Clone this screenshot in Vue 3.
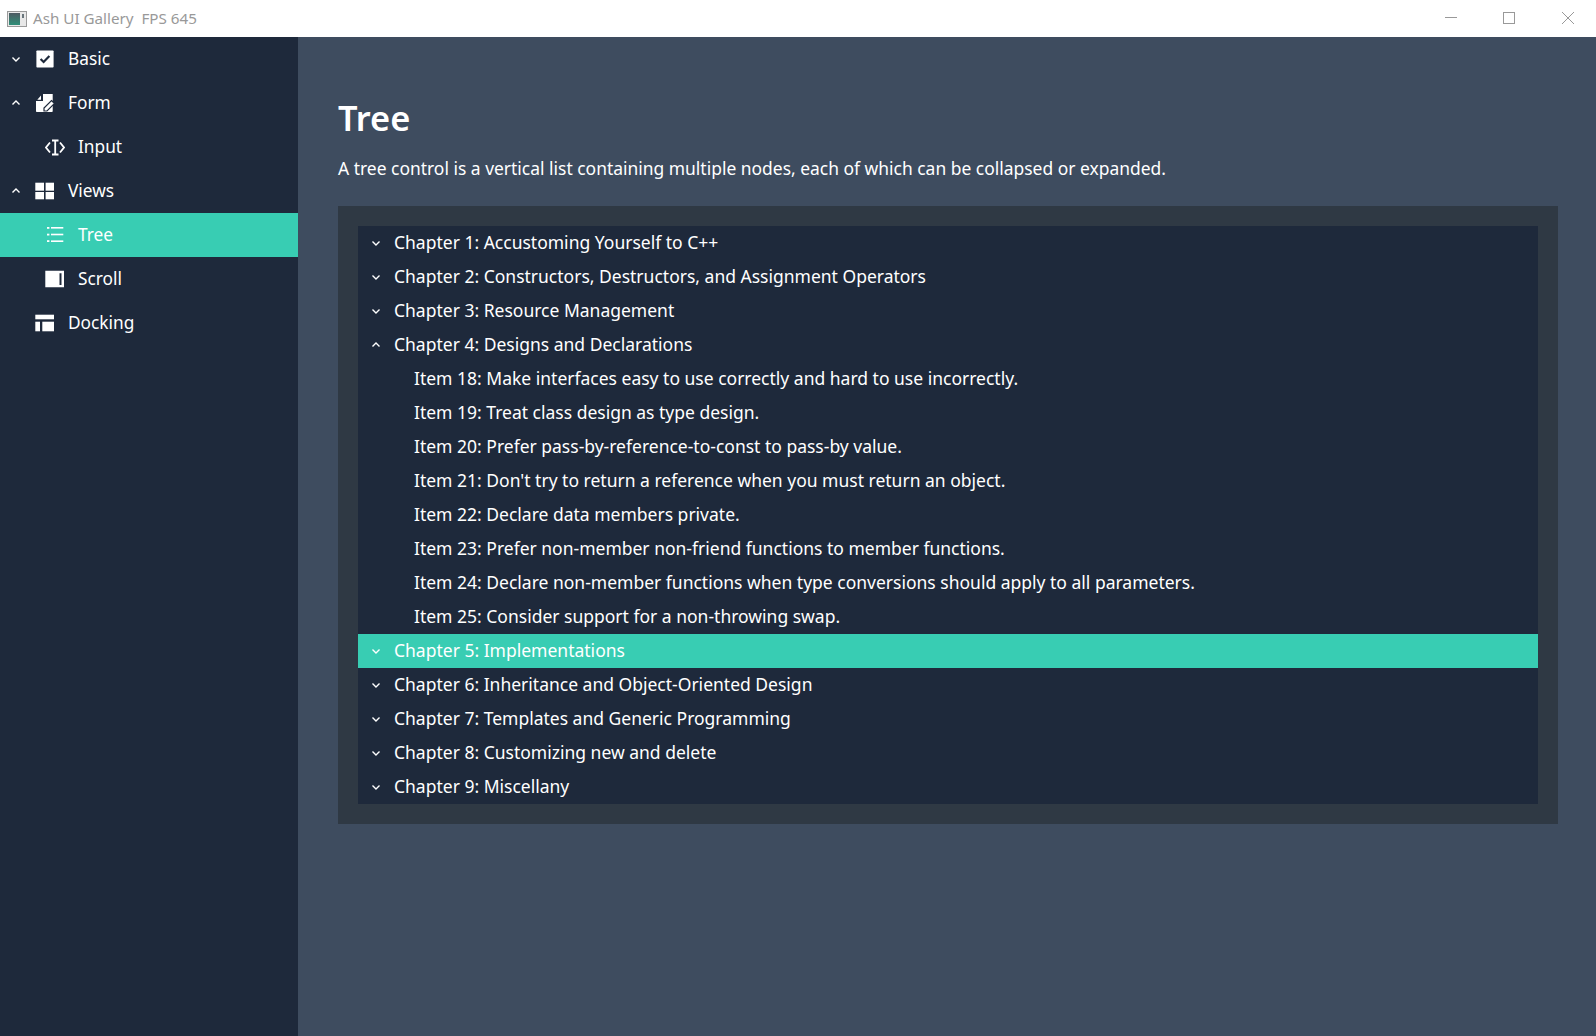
<script setup>
const chapters = [
  { title: 'Chapter 1: Accustoming Yourself to C++' },
  { title: 'Chapter 2: Constructors, Destructors, and Assignment Operators' },
  { title: 'Chapter 3: Resource Management' },
  {
    title: 'Chapter 4: Designs and Declarations',
    open: true,
    items: [
      'Item 18: Make interfaces easy to use correctly and hard to use incorrectly.',
      'Item 19: Treat class design as type design.',
      'Item 20: Prefer pass-by-reference-to-const to pass-by value.',
      "Item 21: Don't try to return a reference when you must return an object.",
      'Item 22: Declare data members private.',
      'Item 23: Prefer non-member non-friend functions to member functions.',
      'Item 24: Declare non-member functions when type conversions should apply to all parameters.',
      'Item 25: Consider support for a non-throwing swap.'
    ]
  },
  { title: 'Chapter 5: Implementations', active: true },
  { title: 'Chapter 6: Inheritance and Object-Oriented Design' },
  { title: 'Chapter 7: Templates and Generic Programming' },
  { title: 'Chapter 8: Customizing new and delete' },
  { title: 'Chapter 9: Miscellany' }
]
</script>

<template>
  <div class="window">
    <header class="titlebar">
      <div class="app-title">
        <svg class="app-icon" width="20" height="16" viewBox="0 0 20 16">
          <defs>
            <linearGradient id="appFill" x1="0" y1="0" x2="0" y2="1">
              <stop offset="0" stop-color="#4d5a62" />
              <stop offset="1" stop-color="#2f8f78" />
            </linearGradient>
          </defs>
          <rect x="0.5" y="0.5" width="19" height="15" fill="#e8e8e8" stroke="#9a9a9a" />
          <rect x="2" y="2" width="11" height="12" fill="url(#appFill)" />
          <rect x="15" y="3" width="2" height="4" fill="#6a767c" />
        </svg>
        <span>Ash UI Gallery&nbsp; FPS 645</span>
      </div>
      <div class="win-buttons">
        <svg width="12" height="12" viewBox="0 0 12 12"><path d="M0 5.5h12" stroke="#999" stroke-width="1" /></svg>
        <svg width="12" height="12" viewBox="0 0 12 12"><rect x="0.5" y="0.5" width="11" height="11" fill="none" stroke="#999" /></svg>
        <svg class="close" width="12" height="12" viewBox="0 0 12 12"><path d="M0 0l12 12M12 0L0 12" stroke="#999" stroke-width="1" /></svg>
      </div>
    </header>

    <div class="body">
      <nav class="sidebar">
        <div class="side-row">
          <svg class="arrow" viewBox="0 0 10 10"><path d="M1.5 3.5L5 7l3.5-3.5" /></svg>
          <svg class="side-icon" viewBox="0 0 20 20">
            <rect x="1.4" y="1.4" width="17.2" height="17.2" rx="0.8" fill="#fff" />
            <path d="M5.6 10l3 3 5.8-6" fill="none" stroke="#1e293b" stroke-width="2.2" />
          </svg>
          <span>Basic</span>
        </div>
        <div class="side-row">
          <svg class="arrow" viewBox="0 0 10 10"><path d="M1.5 6.5L5 3l3.5 3.5" /></svg>
          <svg class="side-icon" viewBox="0 0 20 20">
            <path fill="#fff" d="M2.3 6.8L6 2.4v4.4z" />
            <path fill="#fff" d="M8 1h9.7v17.2a.8.8 0 0 1-.8.8H1.8a.8.8 0 0 1-.8-.8V8h7z" />
            <path fill="#fff" stroke="#1e293b" stroke-width="1.2" d="M16.5 7.5l3 3-7.5 7.5H9v-3z" />
          </svg>
          <span>Form</span>
        </div>
        <div class="side-row child">
          <svg class="side-icon" viewBox="0 0 20 20" fill="none" stroke="#fff" stroke-width="1.8">
            <path d="M5 5.5L1 10.5l4 5M15 5.5l4 5-4 5" />
            <path d="M7 3.5h6.5M7 17.5h6.5M10.2 3.5v14" />
          </svg>
          <span>Input</span>
        </div>
        <div class="side-row">
          <svg class="arrow" viewBox="0 0 10 10"><path d="M1.5 6.5L5 3l3.5 3.5" /></svg>
          <svg class="side-icon" viewBox="0 0 20 20" fill="#fff">
            <rect x="0.3" y="1.7" width="8.7" height="8" />
            <rect x="10.6" y="1.7" width="8.4" height="8" />
            <rect x="0.3" y="11" width="8.7" height="7.3" />
            <rect x="10.6" y="11" width="8.4" height="7.3" />
          </svg>
          <span>Views</span>
        </div>
        <div class="side-row child active">
          <svg class="side-icon" viewBox="0 0 20 20" fill="#fff">
            <rect x="2" y="2" width="2.4" height="1.8" />
            <rect x="2" y="8.7" width="2.4" height="1.8" />
            <rect x="2" y="15.2" width="2.4" height="1.8" />
            <rect x="6" y="2" width="12.3" height="1.6" />
            <rect x="6" y="8.7" width="12.3" height="1.6" />
            <rect x="6" y="15.4" width="12.3" height="1.6" />
          </svg>
          <span>Tree</span>
        </div>
        <div class="side-row child">
          <svg class="side-icon" viewBox="0 0 20 20">
            <path fill="#fff" fill-rule="evenodd" d="M0.3 1.7H19v16.6H0.3zM14.5 4.3V16h2V4.3z" />
          </svg>
          <span>Scroll</span>
        </div>
        <div class="side-row">
          <span class="arrow-gap"></span>
          <svg class="side-icon" viewBox="0 0 20 20" fill="#fff">
            <rect x="0.3" y="1.7" width="18.7" height="4.6" />
            <rect x="0.3" y="8.7" width="4.7" height="9.6" />
            <rect x="7.3" y="8.7" width="11.7" height="9.6" />
          </svg>
          <span>Docking</span>
        </div>
      </nav>

      <main class="content">
        <h1>Tree</h1>
        <p class="desc">A tree control is a vertical list containing multiple nodes, each of which can be collapsed or expanded.</p>
        <section class="panel">
          <div class="tree">
            <template v-for="ch in chapters" :key="ch.title">
              <div class="tree-row" :class="{ active: ch.active }">
                <svg class="arrow" viewBox="0 0 10 10">
                  <path :d="ch.open ? 'M1.5 6.5L5 3l3.5 3.5' : 'M1.5 3.5L5 7l3.5-3.5'" />
                </svg>
                <span class="label">{{ ch.title }}</span>
              </div>
              <div v-for="item in ch.items" :key="item" class="tree-row item">
                <span class="label">{{ item }}</span>
              </div>
            </template>
          </div>
        </section>
      </main>
    </div>
  </div>
</template>

<style>
html, body {
  margin: 0;
  background: #3e4c5f;
}
</style>

<style scoped>
.window {
  width: 1596px;
  height: 1036px;
  display: flex;
  flex-direction: column;
  overflow: hidden;
  font-family: "Noto Sans", sans-serif;
  font-size: 17.5px;
  color: #fff;
}

.titlebar {
  height: 37px;
  flex: none;
  background: #fff;
  display: flex;
  align-items: center;
  justify-content: space-between;
}

.app-title {
  display: flex;
  align-items: center;
  gap: 6px;
  padding-left: 7px;
  font-size: 15.2px;
  color: #999;
}

.app-title span {
  margin-top: -2px;
}

.win-buttons {
  display: flex;
  gap: 46px;
  padding: 0 22px 1px 0;
}

.win-buttons .close {
  margin-left: 1px;
}

.body {
  flex: 1;
  display: flex;
  min-height: 0;
}

.sidebar {
  width: 298px;
  flex: none;
  background: #1e293b;
  font-size: 17.3px;
}

.side-row {
  height: 44px;
  display: flex;
  align-items: center;
  padding-left: 11px;
}

.side-row span {
  margin-top: -2px;
}

.side-row.child {
  padding-left: 45px;
}

.side-row.active,
.tree-row.active {
  background: #38cdb3;
}

.arrow {
  width: 10px;
  height: 10px;
  flex: none;
  fill: none;
  stroke: #fff;
  stroke-width: 1.4;
}

.arrow-gap {
  width: 10px;
  flex: none;
}

.side-icon {
  width: 20px;
  height: 20px;
  flex: none;
  margin-left: 14px;
  margin-right: 13px;
}

.child .side-icon {
  margin-left: 0;
}

.content {
  flex: 1;
  min-width: 0;
  background: #3e4c5f;
  padding: 59px 38px 0 40px;
}

h1 {
  margin: 0;
  font-size: 34.4px;
  font-weight: 600;
  line-height: 44px;
}

.desc {
  margin: 15px 0 0;
  font-size: 17.45px;
  line-height: 26px;
}

.panel {
  margin-top: 25px;
  padding: 20px;
  background: #2f3944;
}

.tree {
  background: #1e293b;
}

.tree-row {
  height: 34px;
  display: flex;
  align-items: center;
  gap: 13px;
  padding-left: 13px;
  white-space: nowrap;
}

.tree-row .label {
  margin-top: -2px;
}

.tree-row.item {
  padding-left: 56px;
}
</style>
